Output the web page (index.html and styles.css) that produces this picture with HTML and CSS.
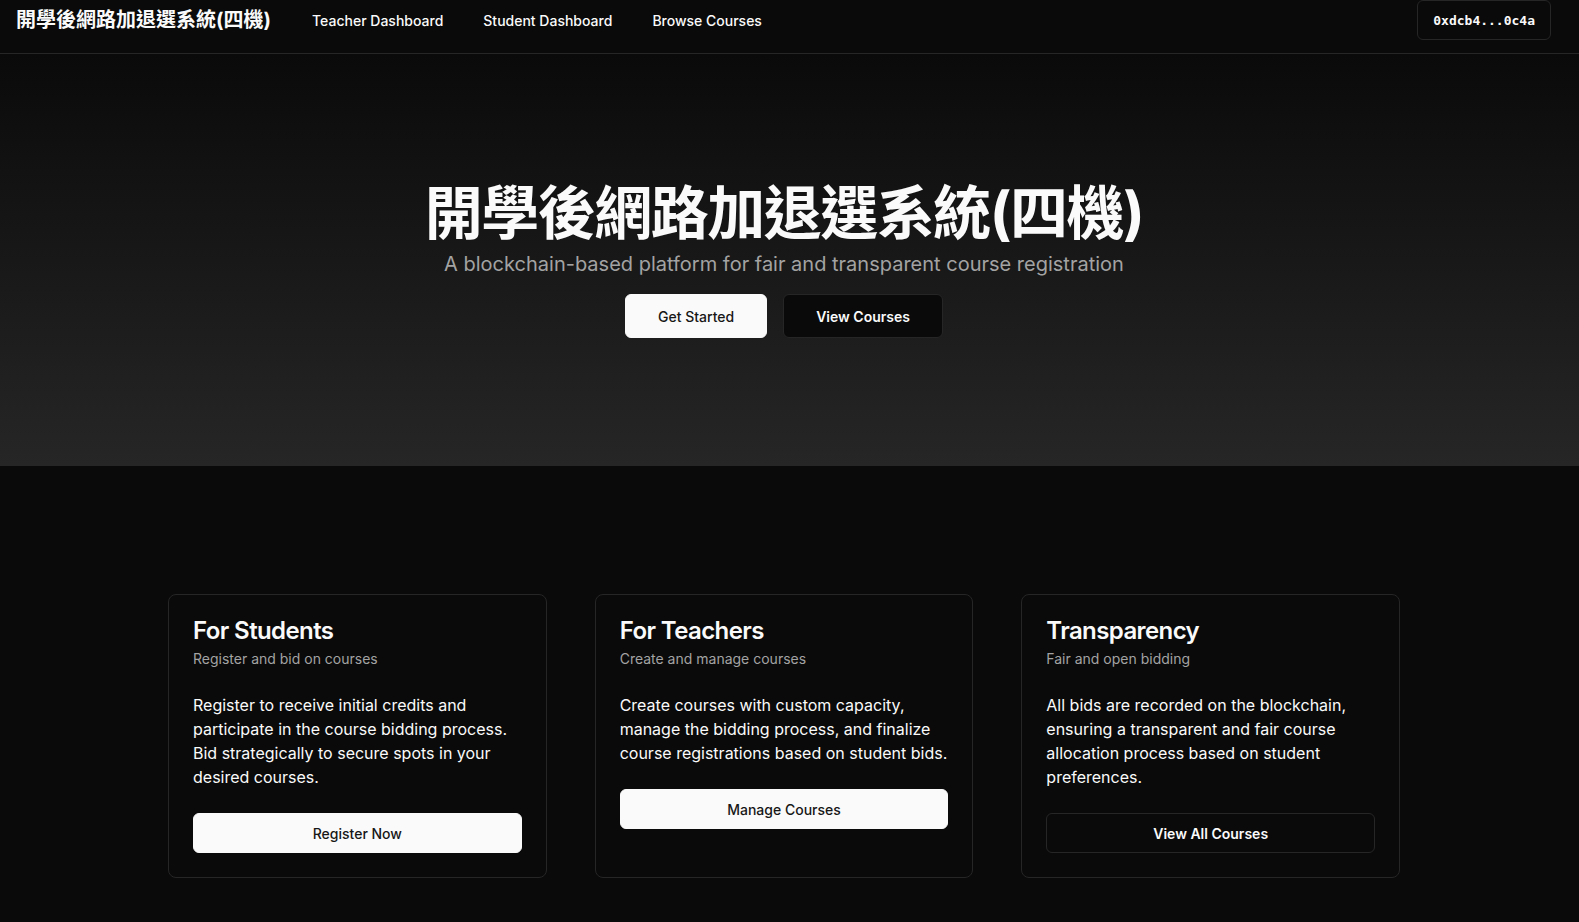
FILE: index.html
```html
<!DOCTYPE html>
<html lang="zh-Hant">
<head>
<meta charset="utf-8">
<title>開學後網路加退選系統(四機)</title>
<link rel="stylesheet" href="styles.css">
</head>
<body>
<header class="topbar">
  <div class="brand">開學後網路加退選系統(四機)</div>
  <nav class="nav">
    <a href="#">Teacher Dashboard</a>
    <a href="#">Student Dashboard</a>
    <a href="#">Browse Courses</a>
  </nav>
  <button class="wallet">0xdcb4...0c4a</button>
</header>

<section class="hero">
  <div class="hero-inner">
    <h1 class="hero-title">開學後網路加退選系統(四機)</h1>
    <p class="hero-sub">A blockchain-based platform for fair and transparent course registration</p>
    <div class="hero-actions">
      <button class="btn btn-light btn-lg">Get Started</button>
      <button class="btn btn-dark btn-lg">View Courses</button>
    </div>
  </div>
</section>

<section class="features">
  <div class="grid">
    <div class="card">
      <div class="card-header">
        <h3 class="card-title">For Students</h3>
        <p class="card-desc">Register and bid on courses</p>
      </div>
      <div class="card-content">
        <p>Register to receive initial credits and participate in the course bidding process. Bid strategically to secure spots in your desired courses.</p>
      </div>
      <div class="card-footer">
        <button class="btn btn-light btn-full">Register Now</button>
      </div>
    </div>
    <div class="card">
      <div class="card-header">
        <h3 class="card-title">For Teachers</h3>
        <p class="card-desc">Create and manage courses</p>
      </div>
      <div class="card-content">
        <p>Create courses with custom capacity, manage the bidding process, and finalize course registrations based on student bids.</p>
      </div>
      <div class="card-footer">
        <button class="btn btn-light btn-full">Manage Courses</button>
      </div>
    </div>
    <div class="card">
      <div class="card-header">
        <h3 class="card-title">Transparency</h3>
        <p class="card-desc">Fair and open bidding</p>
      </div>
      <div class="card-content">
        <p>All bids are recorded on the blockchain, ensuring a transparent and fair course allocation process based on student preferences.</p>
      </div>
      <div class="card-footer">
        <button class="btn btn-outline btn-full">View All Courses</button>
      </div>
    </div>
  </div>
</section>
</body>
</html>
```

FILE: styles.css
```css
* { box-sizing: border-box; }
html, body { margin: 0; padding: 0; }
body {
  background: #0a0a0a;
  color: #fafafa;
  font-family: Inter, "Noto Sans CJK TC", sans-serif;
}

.topbar {
  display: flex;
  align-items: center;
  height: 54px;
  padding: 0 28px 13px 16px;
  border-bottom: 1px solid #262626;
  background: #0a0a0a;
}
.brand {
  font-size: 20px;
  font-weight: 700;
  line-height: 28px;
}
.nav {
  display: flex;
  gap: 40px;
  margin-left: 41px;
}
.nav a {
  color: #fafafa;
  text-decoration: none;
  font-size: 14px;
  font-weight: 500;
}
.wallet {
  margin-left: auto;
  height: 40px;
  padding: 0 15px;
  background: #0a0a0a;
  color: #fafafa;
  border: 1px solid #262626;
  border-radius: 6px;
  font-family: "DejaVu Sans Mono", monospace;
  font-size: 13px;
  font-weight: 700;
}

.hero {
  height: 412px;
  background: linear-gradient(to bottom, #0a0a0a, #262626);
  display: flex;
  align-items: center;
  justify-content: center;
  padding-right: 11px;
}
.hero-inner {
  display: flex;
  flex-direction: column;
  align-items: center;
}
.hero-title {
  margin: 0 0 6px;
  font-size: 58px;
  line-height: 62px;
  font-weight: 700;
  letter-spacing: -1.5px;
}
.hero-sub {
  margin: 0 0 16px;
  font-size: 20px;
  line-height: 28px;
  color: #a3a3a3;
}
.hero-actions {
  display: flex;
  gap: 16px;
}

.btn {
  font-family: Inter, sans-serif;
  font-size: 14px;
  border-radius: 6px;
  cursor: pointer;
}
.btn-lg {
  height: 44px;
  padding: 0 32px;
}
.btn-light {
  background: #fafafa;
  color: #171717;
  border: 1px solid #fafafa;
  font-weight: 500;
}
.btn-dark {
  background: #0a0a0a;
  color: #fafafa;
  border: 1px solid #262626;
  font-weight: 600;
}
.btn-outline {
  background: transparent;
  color: #fafafa;
  border: 1px solid #262626;
  font-weight: 600;
}
.btn-full {
  width: 100%;
  height: 40px;
}

.features {
  padding: 128px 11px 96px 0;
}
.grid {
  width: 1232px;
  margin: 0 auto;
  display: grid;
  grid-template-columns: repeat(3, 1fr);
  gap: 48px;
}
.card {
  border: 1px solid #262626;
  border-radius: 8px;
  background: #0a0a0a;
  display: flex;
  flex-direction: column;
}
.card-header {
  padding: 24px;
  display: flex;
  flex-direction: column;
  gap: 6px;
}
.card-title {
  margin: 0;
  font-size: 24px;
  line-height: 24px;
  font-weight: 600;
  letter-spacing: -0.6px;
}
.card-desc {
  margin: 0;
  font-size: 14px;
  line-height: 20px;
  color: #a3a3a3;
}
.card-content {
  padding: 0 24px 24px;
}
.card-content p {
  margin: 0;
  font-size: 16px;
  line-height: 24px;
}
.card-footer {
  padding: 0 24px 24px;
}
```
